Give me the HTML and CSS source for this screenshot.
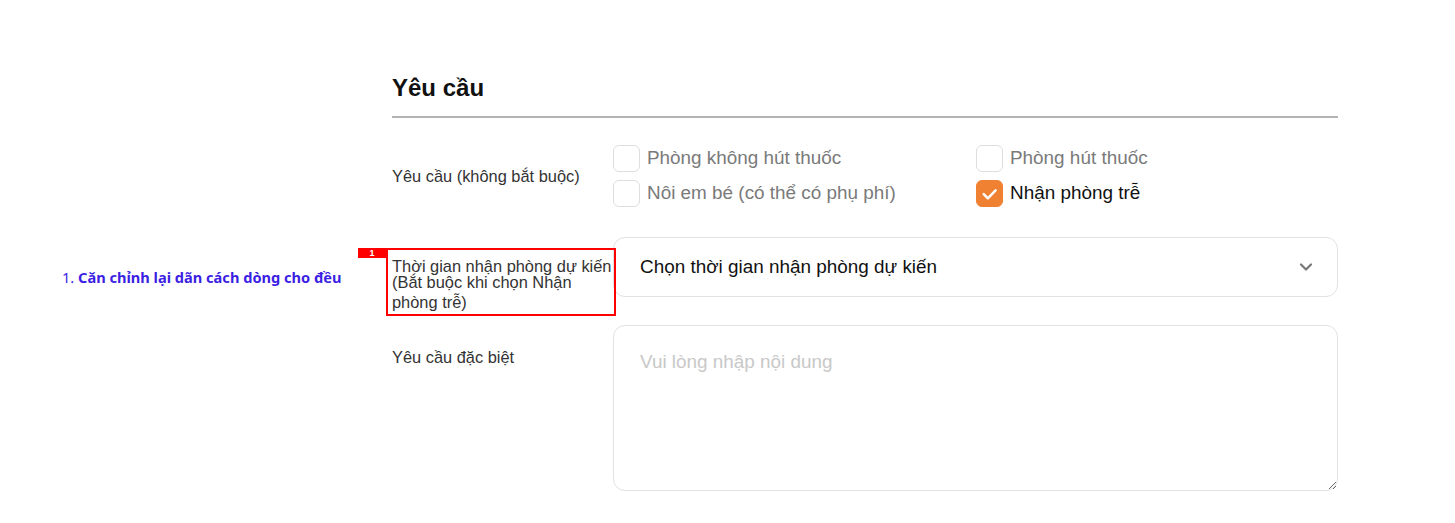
FILE: index.html
```html
<!DOCTYPE html>
<html lang="vi">
<head>
<meta charset="utf-8">
<title>Yêu cầu</title>
<link rel="stylesheet" href="styles.css">
</head>
<body>
<div class="note"><span class="note-num">1.</span> <b class="note-text">Căn chỉnh lại dãn cách dòng cho đều</b></div>
<section class="requests">
  <h2 class="title">Yêu cầu</h2>
  <div class="row row-options">
    <div class="label">Yêu cầu (không bắt buộc)</div>
    <div class="options">
      <label class="opt"><span class="box"></span><span class="opt-text">Phòng không hút thuốc</span></label>
      <label class="opt"><span class="box"></span><span class="opt-text">Phòng hút thuốc</span></label>
      <label class="opt"><span class="box"></span><span class="opt-text">Nôi em bé (có thể có phụ phí)</span></label>
      <label class="opt checked"><span class="box"><svg viewBox="0 0 28 28" width="28" height="28"><path d="M7.5 14.2l4.6 4.6L20.8 10" fill="none" stroke="#fff" stroke-width="2.8" stroke-linecap="round" stroke-linejoin="round"/></svg></span><span class="opt-text">Nhận phòng trễ</span></label>
    </div>
  </div>
  <div class="row row-time">
    <div class="label label-time">
      <span class="l1">Thời gian nhận phòng dự kiến</span>
      <span class="l2">(Bắt buộc khi chọn Nhận phòng trễ)</span>
      <span class="mark"><span class="badge">1</span></span>
    </div>
    <div class="select">
      <span class="select-text">Chọn thời gian nhận phòng dự kiến</span>
      <svg class="chev" viewBox="0 0 14 10" width="14" height="10"><path d="M2 2.5l5 5 5-5" fill="none" stroke="#777" stroke-width="2.2" stroke-linecap="round" stroke-linejoin="round"/></svg>
    </div>
  </div>
  <div class="row row-special">
    <div class="label label-special">Yêu cầu đặc biệt</div>
    <textarea class="textarea" placeholder="Vui lòng nhập nội dung"></textarea>
  </div>
</section>
</body>
</html>
```
FILE: styles.css
```css
* { box-sizing: border-box; }
html, body { margin: 0; padding: 0; background: #fff; }
body {
  font-family: "Liberation Sans", Arial, sans-serif;
  color: #333;
  position: relative;
  width: 1455px;
  height: 523px;
  overflow: hidden;
}
.note {
  position: absolute;
  left: 62px;
  top: 267px;
  font-family: "Noto Sans", "Open Sans", sans-serif;
  font-size: 14.6px;
  color: #3c1fe3;
  line-height: 20px;
  white-space: nowrap;
}
.note-num { font-weight: 400; }
.note-text { font-weight: 700; }
.requests {
  margin-left: 392px;
  width: 946px;
  padding-top: 74px;
}
.title {
  margin: 0;
  font-size: 24px;
  line-height: 28px;
  font-weight: 700;
  color: #111;
  padding-bottom: 14px;
  border-bottom: 2px solid #b4b4b4;
}
.row { display: flex; }
.label {
  width: 221px;
  flex: none;
  font-size: 16.4px;
  line-height: 20px;
  color: #333;
}
.row-options { margin-top: 27px; align-items: center; }
.options {
  display: grid;
  grid-template-columns: 363px 1fr;
  row-gap: 8px;
}
.opt { display: flex; align-items: center; gap: 7px; height: 27px; }
.box {
  width: 27px; height: 27px;
  border: 1px solid #dedede;
  border-radius: 6px;
  background: #fff;
  display: flex; align-items: center; justify-content: center;
  flex: none;
}
.opt-text { font-size: 18.9px; color: #7a7a7a; line-height: 22px; margin-top: -2px; }
.opt.checked .box { background: #f08133; border-color: #f08133; }
.opt.checked .opt-text { color: #111; }
.row-time { margin-top: 30px; }
.label-time { padding-top: 19px; margin-bottom: -20px; position: relative; }
.label-time .l1 { display: block; margin-bottom: -4px; }
.label-time .l2 { display: block; }
.mark {
  position: absolute;
  left: -6px; top: 11px;
  width: 230px; height: 68px;
  border: 2px solid #f00;
}
.badge {
  position: absolute;
  left: -30px; top: -2px;
  width: 28px; height: 10px;
  background: #f00;
  color: #fff;
  font-size: 9px;
  font-weight: 700;
  line-height: 10px;
  text-align: center;
}
.select {
  flex: 1;
  height: 60px;
  border: 1px solid #e2e2e2;
  border-radius: 12px;
  display: flex;
  align-items: center;
  justify-content: space-between;
  padding: 0 24px 0 26px;
}
.select-text { font-size: 18.9px; color: #111; }
.row-special { margin-top: 28px; }
.label-special { padding-top: 22px; }
.textarea {
  flex: 1;
  height: 166px;
  border: 1px solid #e2e2e2;
  border-radius: 12px;
  padding: 25px 26px;
  font-family: "Liberation Sans", Arial, sans-serif;
  font-size: 18.9px;
  line-height: 22px;
  color: #111;
  outline: none;
  resize: both;
}
.textarea::placeholder { color: #c8c8c8; }
```
